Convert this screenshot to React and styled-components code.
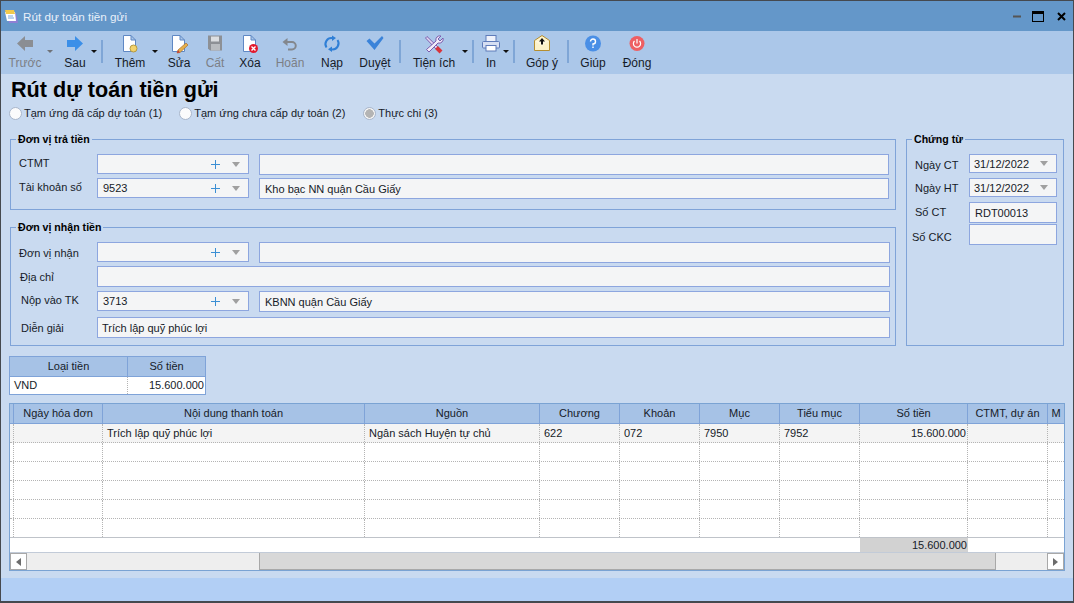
import React from 'react'
import styled, { createGlobalStyle } from 'styled-components'

const GlobalStyle = createGlobalStyle`
  html, body {
    margin: 0;
    padding: 0;
    background: #c9daf0;
  }
  * {
    box-sizing: border-box;
  }
`

const Window = styled.div`
  width: 1074px;
  height: 603px;
  display: flex;
  flex-direction: column;
  overflow: hidden;
  border: 1px solid #45494f;
  border-bottom-width: 2px;
  font-family: "Liberation Sans", Arial, sans-serif;
  font-size: 11px;
  color: #161b28;
  background: #c9daf0;
`

const TitleBar = styled.div`
  height: 30px;
  flex: none;
  display: flex;
  align-items: center;
  padding: 0 7px 0 3px;
  background: #6497c9;
  color: #e9f0f9;
`

const TitleText = styled.span`
  margin-left: 4px;
  font-size: 11.7px;
`

const WindowControls = styled.div`
  margin-left: auto;
  display: flex;
  align-items: center;
  gap: 11px;
`

const Toolbar = styled.div`
  height: 43px;
  flex: none;
  display: flex;
  align-items: flex-start;
  padding: 4px 0 0 3px;
  background: #abc7e9;
  font-size: 12px;
`

const ToolButton = styled.div`
  flex: none;
  width: ${props => props.$w}px;
  margin-left: ${props => props.$ml || 0}px;
  display: flex;
  flex-direction: column;
  align-items: center;
  color: ${props => (props.$disabled ? '#7c7f86' : '#161b28')};
  white-space: nowrap;
`

const ToolIcon = styled.div`
  height: 20px;
  display: flex;
  justify-content: center;
`

const ToolLabel = styled.span`
  margin-top: 1px;
  line-height: 14px;
`

const Caret = styled.div`
  flex: none;
  width: 8px;
  margin: 15px 0 0 ${props => props.$ml || 0}px;
  height: 4px;
  display: flex;
  justify-content: center;

  &::before {
    content: '';
    border: 3px solid transparent;
    border-bottom: 0;
    border-top: 3px solid ${props => (props.$disabled ? '#6f7278' : '#111')};
  }
`

const Separator = styled.div`
  flex: none;
  width: 2px;
  height: 23px;
  margin: 5px 0 0 ${props => props.$ml || 0}px;
  background: #7fa6d6;
`

const Main = styled.div`
  flex: 1;
  display: flex;
  flex-direction: column;
  padding: 0 9px;
`

const Heading = styled.h1`
  margin: 3px 0 0 1px;
  font-size: 21.6px;
  line-height: 26px;
  font-weight: bold;
  color: #000;
`

const RadioRow = styled.div`
  display: flex;
  margin: 3px 0 0 -1px;
  height: 14px;
`

const Radio = styled.label`
  display: flex;
  align-items: center;
  gap: 2px;
  margin-right: ${props => props.$mr || 0}px;
  line-height: 14px;
  white-space: nowrap;
`

const RadioDot = styled.span`
  width: 13px;
  height: 13px;
  border-radius: 50%;
  background: ${props => (props.$on ? 'radial-gradient(circle, #b4b4b4 0 4px, #f4f4f4 4.5px)' : '#fbfbfc')};
  border: 1px solid #a9b6cb;
`

const Forms = styled.div`
  display: flex;
  gap: 10px;
  margin-top: 12px;
`

const LeftForms = styled.div`
  width: 886px;
  display: flex;
  flex-direction: column;
  gap: 10px;
`

const Group = styled.fieldset`
  margin: 0;
  min-width: 0;
  padding: 8px 0 ${props => props.$pb || 0}px;
  border: 1px solid #7fa3d8;
  width: ${props => props.$w || 'auto'};
`

const Legend = styled.legend`
  margin-left: 5px;
  padding: 0 2px;
  font-weight: bold;
  font-size: 10.6px;
  line-height: 14px;
  color: #000;
`

const Row = styled.div`
  display: flex;
  align-items: flex-start;
  height: ${props => props.$h || 21}px;
  margin-top: ${props => props.$mt || 0}px;
`

const FieldLabel = styled.div`
  flex: none;
  width: ${props => props.$w || 86}px;
  padding-left: ${props => props.$pl || 8}px;
  line-height: ${props => props.$lh || 18}px;
  white-space: nowrap;
`

const Field = styled.div`
  flex: none;
  width: ${props => props.$w}px;
  height: ${props => props.$h || 21}px;
  margin-left: ${props => props.$ml || 0}px;
  padding: 1px 5px 0 ${props => props.$pl || 5}px;
  line-height: ${props => (props.$h || 21) - 2}px;
  background: #f4f5f6;
  border: 1px solid #8da6df;
  white-space: nowrap;
`

const Combo = styled(Field)`
  display: flex;
  align-items: center;
  padding-top: 0;
  line-height: normal;
`

const ComboText = styled.span`
  flex: 1;
`

const PlusSign = styled.span`
  width: 9px;
  height: 9px;
  margin-right: 12px;
  background:
    linear-gradient(#3b8fd4, #3b8fd4) center / 9px 1px no-repeat,
    linear-gradient(#3b8fd4, #3b8fd4) center / 1px 9px no-repeat;
`

const ComboArrow = styled.span`
  margin-right: 3px;
  border: 4px solid transparent;
  border-bottom: 0;
  border-top: 5px solid #a0a0a0;
`

const SmallGrid = styled.div`
  width: 197px;
  margin: 10px 0 0 -1px;
  border: 1px solid #7fa3d8;
  background: #fff;
`

const MainGrid = styled.div`
  width: 1056px;
  height: 168px;
  margin: 8px 0 0 -1px;
  border: 1px solid #7aa3d3;
  background: #fff;
  overflow: hidden;
`

const HeaderRow = styled.div`
  display: flex;
  height: ${props => props.$h}px;
  background: #a6c2e6;
  border-bottom: 1px solid #7fa3d8;
`

const HeaderCell = styled.div`
  flex: none;
  width: ${props => props.$w}px;
  line-height: ${props => props.$h - 1}px;
  text-align: center;
  border-right: 1px solid #7fa3d8;
  white-space: nowrap;
  overflow: hidden;
  &:last-child {
    border-right: 0;
  }
`

const BodyRow = styled.div`
  display: flex;
  height: ${props => props.$h}px;
  background: ${props => (props.$active ? '#f4f4f4' : '#fff')};
  border-bottom: ${props => (props.$last ? '1px solid #bfc3c9' : '1px dotted #b4b4b4')};
`

const SmallRow = styled(BodyRow)`
  border-bottom: 0;
`

const BodyCell = styled.div`
  flex: none;
  width: ${props => props.$w}px;
  padding: 0 ${props => (props.$right ? 1 : 4)}px;
  line-height: ${props => props.$h - 1}px;
  text-align: ${props => (props.$right ? 'right' : 'left')};
  border-right: 1px dotted #b4b4b4;
  white-space: nowrap;
  overflow: hidden;
  &:last-child {
    border-right: 0;
  }
`

const IndicatorCell = styled.div`
  flex: none;
  width: 4px;
  border-right: 1px dotted #b4b4b4;
`

const FooterRow = styled.div`
  display: flex;
  height: 15px;
  border-bottom: 1px solid #c2cbd8;
`

const FooterCell = styled.div`
  flex: none;
  width: ${props => props.$w}px;
  padding-right: 1px;
  line-height: 14px;
  text-align: right;
  background: ${props => (props.$total ? '#d2d2d2' : 'transparent')};
`

const ScrollBar = styled.div`
  display: flex;
  height: 17px;
  background: #eeeeee;
`

const ScrollButton = styled.div`
  flex: none;
  width: 17px;
  display: flex;
  align-items: center;
  justify-content: center;
  background: #fff;
  border: 1px solid #a8a8a8;

  &::before {
    content: '';
    border: 4px solid transparent;
    ${props =>
      props.$left
        ? 'border-left: 0; border-right: 5px solid #6c6c6c;'
        : 'border-right: 0; border-left: 5px solid #6c6c6c;'}
  }
`

const ScrollTrack = styled.div`
  flex: 1;
  padding-left: 232px;
  padding-right: 51px;
`

const ScrollThumb = styled.div`
  height: 17px;
  background: #d8d8d8;
  border: 1px solid #a8a8a8;
  border-width: 0 1px 1px;
`

const StatusBar = styled.div`
  height: 23px;
  flex: none;
  background: #b2cff5;
`

const BackIcon = ({ fill }) => (
  <svg width='20' height='20' viewBox='0 0 20 20'>
    <path d='M2 8.5 L10 1 V5 H18 V12 H10 V16 Z' fill={fill} />
  </svg>
)

const ForwardIcon = ({ fill }) => (
  <svg width='20' height='20' viewBox='0 0 20 20'>
    <path d='M18 8.5 L10 1 V5 H2 V12 H10 V16 Z' fill={fill} />
  </svg>
)

const Page = () => (
  <path d='M3.5 .5 H11 L15.5 5 V16.5 H3.5 Z M11 .5 V5 H15.5' fill='#fff' stroke='#5f88c4' />
)

const NewIcon = () => (
  <svg width='20' height='20' viewBox='0 0 20 20'>
    <Page />
    <circle cx='13.5' cy='13.5' r='3.5' fill='#f3d36b' stroke='#b39a45' />
  </svg>
)

const EditIcon = () => (
  <svg width='20' height='20' viewBox='0 0 20 20'>
    <Page />
    <path d='M17 8 L19 10 L11 17.5 L8 18 L9 15 Z' fill='#e6b04a' stroke='#a86f33' strokeWidth='.7' />
    <path d='M9 15 L8 18 L11 17.5 Z' fill='#c33b3b' />
  </svg>
)

const SaveIcon = () => (
  <svg width='20' height='20' viewBox='0 0 20 20'>
    <path d='M3 .5 H17 V15.5 H5 L3 13.5 Z' fill='#8d9095' />
    <rect x='6' y='1.5' width='8' height='5' fill='#dcdee1' />
    <rect x='6' y='9' width='9' height='6.5' fill='#b9bcc0' />
  </svg>
)

const DeleteIcon = () => (
  <svg width='20' height='20' viewBox='0 0 20 20'>
    <Page />
    <circle cx='13.5' cy='13.5' r='4.5' fill='#e3192c' />
    <path d='M11.5 11.5 L15.5 15.5 M15.5 11.5 L11.5 15.5' stroke='#fff' strokeWidth='1.4' />
  </svg>
)

const UndoIcon = () => (
  <svg width='20' height='20' viewBox='0 0 20 20'>
    <path d='M5 7 H12 A3.5 3.5 0 0 1 12 14.5 H8' fill='none' stroke='#83878d' strokeWidth='2' />
    <path d='M7.5 3 V11 L2.5 7 Z' fill='#83878d' />
  </svg>
)

const ReloadIcon = () => (
  <svg width='20' height='20' viewBox='0 0 20 20'>
    <path d='M4.5 12.5 A6 6 0 0 1 10.5 3.2' fill='none' stroke='#2f7fd6' strokeWidth='2' />
    <path d='M15.5 5 A6 6 0 0 1 9.5 14.3' fill='none' stroke='#2f7fd6' strokeWidth='2' />
    <path d='M10 .5 L14 3 L10 6 Z M10 11.5 L6 14.3 L10 17 Z' fill='#2f7fd6' />
  </svg>
)

const CheckIcon = () => (
  <svg width='20' height='20' viewBox='0 0 20 20'>
    <path d='M1.5 6 L4.5 3.5 L9.5 8.5 L17 1 L18.5 3 L9.5 15 Z' fill='#3a83d9' />
  </svg>
)

const ToolsIcon = () => (
  <svg width='20' height='20' viewBox='0 0 20 20'>
    <path d='M1.5 3 L3 1.5 L15 13 L13 15 Z' fill='#e4dbf2' stroke='#7a5cae' />
    <path d='M17 1 A4 4 0 0 0 12 6 L2.5 14.5 L5 17 L14 8 A4 4 0 0 0 19 3 L16 6 L14 4 Z' fill='#f1ecf8' stroke='#7a5cae' />
    <path d='M12.5 12.5 L17 17' stroke='#d8343c' strokeWidth='4' />
  </svg>
)

const PrintIcon = () => (
  <svg width='20' height='20' viewBox='0 0 20 20'>
    <rect x='5' y='.5' width='10' height='6' fill='#eef2fb' stroke='#5f7cba' />
    <rect x='1.5' y='6.5' width='17' height='6.5' rx='1' fill='#d6dff2' stroke='#5f7cba' />
    <rect x='5' y='10.5' width='10' height='5.5' fill='#fff' stroke='#5f7cba' />
  </svg>
)

const MailIcon = () => (
  <svg width='20' height='20' viewBox='0 0 20 20'>
    <path d='M2.5 5.5 L10 .5 L17.5 5.5 V15.5 H2.5 Z' fill='#fdf3c9' stroke='#b58e30' />
    <path d='M3 6 L10 11 L17 6 Z' fill='#fff8dc' />
    <path d='M10 3 L13 6.5 H11 V9.5 H9 V6.5 H7 Z' fill='#111' />
  </svg>
)

const HelpIcon = () => (
  <svg width='20' height='20' viewBox='0 0 20 20'>
    <circle cx='10' cy='8.5' r='8' fill='#4a8fe6' />
    <path d='M7.5 6.5 A2.5 2.5 0 1 1 10 9 V10.5' fill='none' stroke='#fff' strokeWidth='1.4' />
    <rect x='9.3' y='11.5' width='1.4' height='1.5' fill='#fff' />
  </svg>
)

const PowerIcon = () => (
  <svg width='20' height='20' viewBox='0 0 20 20'>
    <circle cx='10' cy='8.5' r='7.5' fill='#ee5f63' />
    <path d='M7.5 6 A3.6 3.6 0 1 0 12.5 6' fill='none' stroke='#fff' strokeWidth='1.2' />
    <path d='M10 4 V8.5' stroke='#fff' strokeWidth='1.2' />
  </svg>
)

const AppIcon = () => (
  <svg width='15' height='15' viewBox='0 0 15 15'>
    <path d='M3 4 H12 L14 14 H5 Z' fill='#8f7fd4' />
    <path d='M1 3 H11 L12 12 H3 Z' fill='#fff' />
    <path d='M1 1 H10 L11 5 H2 Z' fill='#f1c94c' />
    <path d='M4 7 H9 M4 9 H10' stroke='#7aa6dc' />
  </svg>
)

const GRID_COLUMNS = [
  { title: 'Ngày hóa đơn', width: 89 },
  { title: 'Nội dung thanh toán', width: 262 },
  { title: 'Nguồn', width: 175 },
  { title: 'Chương', width: 80 },
  { title: 'Khoản', width: 80 },
  { title: 'Mục', width: 80 },
  { title: 'Tiểu mục', width: 80 },
  { title: 'Số tiền', width: 108 },
  { title: 'CTMT, dự án', width: 80 },
  { title: 'M', width: 16 }
]

const FIRST_ROW = ['', 'Trích lập quỹ phúc lợi', 'Ngân sách Huyện tự chủ', '622', '072', '7950', '7952', '15.600.000', '', '']
const EMPTY_ROWS = [1, 2, 3, 4, 5]

const App = () => (
  <Window>
    <GlobalStyle />
    <TitleBar>
      <AppIcon />
      <TitleText>Rút dự toán tiền gửi</TitleText>
      <WindowControls>
        <svg width='8' height='3' viewBox='0 0 8 3'><rect width='8' height='2' y='.5' fill='#555' /></svg>
        <svg width='12' height='11' viewBox='0 0 12 11'>
          <rect x='.5' y='.5' width='11' height='10' fill='none' stroke='#000' />
          <rect width='12' height='3' fill='#000' />
        </svg>
        <svg width='9' height='9' viewBox='0 0 9 9' style={{ marginLeft: 2 }}>
          <path d='M1 1 L8 8 M8 1 L1 8' stroke='#000' strokeWidth='2' />
        </svg>
      </WindowControls>
    </TitleBar>

    <Toolbar>
      <ToolButton $w={42} $disabled>
        <ToolIcon><BackIcon fill='#8b8e93' /></ToolIcon>
        <ToolLabel>Trước</ToolLabel>
      </ToolButton>
      <Caret $disabled />
      <ToolButton $w={30} $ml={6}>
        <ToolIcon><ForwardIcon fill='#3b8fe8' /></ToolIcon>
        <ToolLabel>Sau</ToolLabel>
      </ToolButton>
      <Caret />
      <Separator $ml={3} />
      <ToolButton $w={40} $ml={7}>
        <ToolIcon><NewIcon /></ToolIcon>
        <ToolLabel>Thêm</ToolLabel>
      </ToolButton>
      <Caret $ml={1} />
      <ToolButton $w={30} $ml={5}>
        <ToolIcon><EditIcon /></ToolIcon>
        <ToolLabel>Sửa</ToolLabel>
      </ToolButton>
      <ToolButton $w={30} $ml={6} $disabled>
        <ToolIcon><SaveIcon /></ToolIcon>
        <ToolLabel>Cất</ToolLabel>
      </ToolButton>
      <ToolButton $w={30} $ml={5}>
        <ToolIcon><DeleteIcon /></ToolIcon>
        <ToolLabel>Xóa</ToolLabel>
      </ToolButton>
      <ToolButton $w={36} $ml={7} $disabled>
        <ToolIcon><UndoIcon /></ToolIcon>
        <ToolLabel>Hoãn</ToolLabel>
      </ToolButton>
      <ToolButton $w={30} $ml={9}>
        <ToolIcon><ReloadIcon /></ToolIcon>
        <ToolLabel>Nạp</ToolLabel>
      </ToolButton>
      <ToolButton $w={34} $ml={11}>
        <ToolIcon><CheckIcon /></ToolIcon>
        <ToolLabel>Duyệt</ToolLabel>
      </ToolButton>
      <Separator $ml={7} />
      <ToolButton $w={44} $ml={11}>
        <ToolIcon><ToolsIcon /></ToolIcon>
        <ToolLabel>Tiện ích</ToolLabel>
      </ToolButton>
      <Caret $ml={5} />
      <Separator $ml={3} />
      <ToolButton $w={22} $ml={6}>
        <ToolIcon><PrintIcon /></ToolIcon>
        <ToolLabel>In</ToolLabel>
      </ToolButton>
      <Caret />
      <Separator $ml={3} />
      <ToolButton $w={36} $ml={9}>
        <ToolIcon><MailIcon /></ToolIcon>
        <ToolLabel>Góp ý</ToolLabel>
      </ToolButton>
      <Separator $ml={7} />
      <ToolButton $w={30} $ml={9}>
        <ToolIcon><HelpIcon /></ToolIcon>
        <ToolLabel>Giúp</ToolLabel>
      </ToolButton>
      <ToolButton $w={34} $ml={12}>
        <ToolIcon><PowerIcon /></ToolIcon>
        <ToolLabel>Đóng</ToolLabel>
      </ToolButton>
    </Toolbar>

    <Main>
      <Heading>Rút dự toán tiền gửi</Heading>
      <RadioRow>
        <Radio $mr={17}><RadioDot />Tạm ứng đã cấp dự toán (1)</Radio>
        <Radio $mr={18}><RadioDot />Tạm ứng chưa cấp dự toán (2)</Radio>
        <Radio><RadioDot $on />Thực chi (3)</Radio>
      </RadioRow>

      <Forms>
        <LeftForms>
          <Group $pb={10}>
            <Legend>Đơn vị trả tiền</Legend>
            <Row>
              <FieldLabel>CTMT</FieldLabel>
              <Combo $w={152} $h={20}>
                <ComboText />
                <PlusSign />
                <ComboArrow />
              </Combo>
              <Field $w={630} $ml={10} />
            </Row>
            <Row $mt={3}>
              <FieldLabel>Tài khoản số</FieldLabel>
              <Combo $w={152} $h={20}>
                <ComboText>9523</ComboText>
                <PlusSign />
                <ComboArrow />
              </Combo>
              <Field $w={630} $ml={10}>Kho bạc NN quận Cầu Giấy</Field>
            </Row>
          </Group>

          <Group $pb={7}>
            <Legend>Đơn vị nhận tiền</Legend>
            <Row>
              <FieldLabel $lh={22}>Đơn vị nhận</FieldLabel>
              <Combo $w={152} $h={20}>
                <ComboText />
                <PlusSign />
                <ComboArrow />
              </Combo>
              <Field $w={631} $ml={10} />
            </Row>
            <Row $mt={3}>
              <FieldLabel $pl={9} $lh={22}>Địa chỉ</FieldLabel>
              <Field $w={793} />
            </Row>
            <Row $mt={4}>
              <FieldLabel $pl={10}>Nộp vào TK</FieldLabel>
              <Combo $w={152} $h={20}>
                <ComboText>3713</ComboText>
                <PlusSign />
                <ComboArrow />
              </Combo>
              <Field $w={631} $ml={10}>KBNN quận Cầu Giấy</Field>
            </Row>
            <Row $mt={5}>
              <FieldLabel $pl={10} $lh={22}>Diễn giải</FieldLabel>
              <Field $w={793} $pl={4}>Trích lập quỹ phúc lợi</Field>
            </Row>
          </Group>
        </LeftForms>

        <Group $w='158px'>
          <Legend>Chứng từ</Legend>
          <Row $h={19}>
            <FieldLabel $w={62} $lh={22}>Ngày CT</FieldLabel>
            <Combo $w={88} $h={19} $pl={4}>
              <ComboText>31/12/2022</ComboText>
              <ComboArrow />
            </Combo>
          </Row>
          <Row $h={19} $mt={5}>
            <FieldLabel $w={62} $lh={20}>Ngày HT</FieldLabel>
            <Combo $w={88} $h={19} $pl={4}>
              <ComboText>31/12/2022</ComboText>
              <ComboArrow />
            </Combo>
          </Row>
          <Row $mt={5}>
            <FieldLabel $w={62} $lh={20}>Số CT</FieldLabel>
            <Field $w={88}>RDT00013</Field>
          </Row>
          <Row $mt={1}>
            <FieldLabel $w={62} $pl={5} $lh={26}>Số CKC</FieldLabel>
            <Field $w={88} />
          </Row>
        </Group>
      </Forms>

      <SmallGrid>
        <HeaderRow $h={20}>
          <HeaderCell $w={118} $h={20}>Loại tiền</HeaderCell>
          <HeaderCell $w={77} $h={20}>Số tiền</HeaderCell>
        </HeaderRow>
        <SmallRow $h={17}>
          <BodyCell $w={118} $h={18}>VND</BodyCell>
          <BodyCell $w={77} $h={18} $right>15.600.000</BodyCell>
        </SmallRow>
      </SmallGrid>

      <MainGrid>
        <HeaderRow $h={20}>
          <HeaderCell $w={4} $h={20} />
          {GRID_COLUMNS.map(col => (
            <HeaderCell key={col.title} $w={col.width} $h={20}>{col.title}</HeaderCell>
          ))}
        </HeaderRow>
        <BodyRow $h={19} $active>
          <IndicatorCell />
          {GRID_COLUMNS.map((col, i) => (
            <BodyCell key={col.title} $w={col.width} $h={19} $right={i === 7}>{FIRST_ROW[i]}</BodyCell>
          ))}
        </BodyRow>
        {EMPTY_ROWS.map(row => (
          <BodyRow key={row} $h={19} $last={row === 5}>
            <IndicatorCell />
            {GRID_COLUMNS.map(col => (
              <BodyCell key={col.title} $w={col.width} $h={19} />
            ))}
          </BodyRow>
        ))}
        <FooterRow>
          <FooterCell $w={850} />
          <FooterCell $w={108} $total>15.600.000</FooterCell>
        </FooterRow>
        <ScrollBar>
          <ScrollButton $left />
          <ScrollTrack>
            <ScrollThumb />
          </ScrollTrack>
          <ScrollButton />
        </ScrollBar>
      </MainGrid>
    </Main>

    <StatusBar />
  </Window>
)

export default App
